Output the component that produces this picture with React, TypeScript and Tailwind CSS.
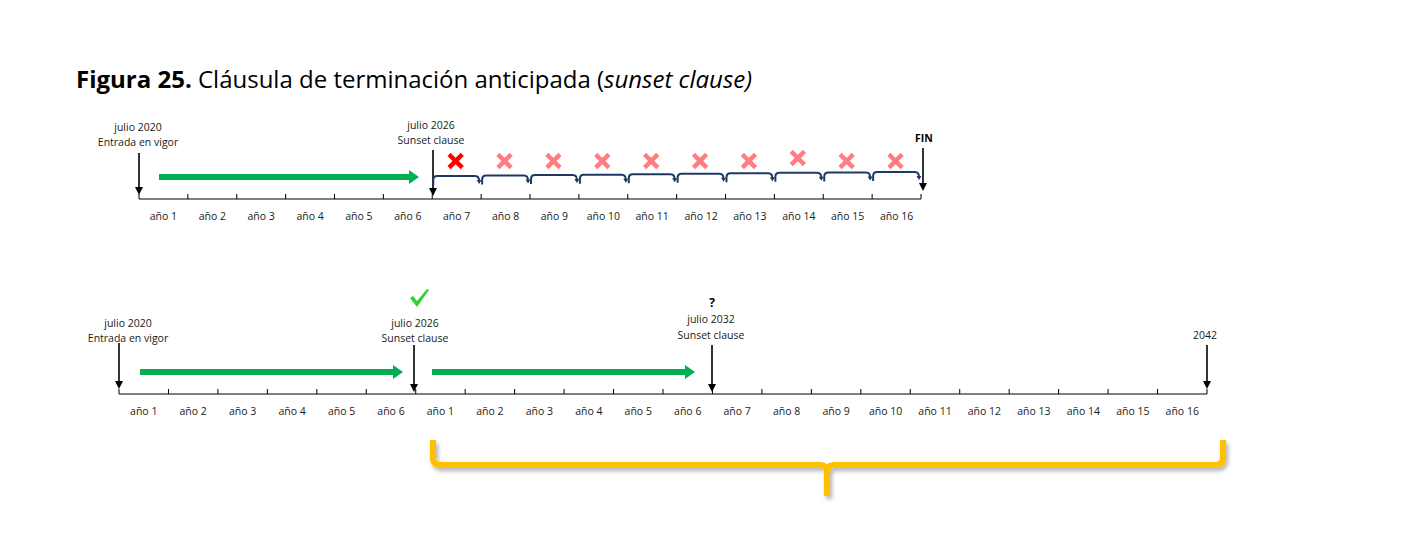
const FONT = "'Open Sans', 'Noto Sans', sans-serif";

function DownArrow({ x, y1, y2 }: { x: number; y1: number; y2: number }) {
  return (
    <g>
      <line x1={x} y1={y1} x2={x} y2={y2 - 7} stroke="#000" strokeWidth={1.6} />
      <polygon points={`${x - 4},${y2 - 8} ${x + 4},${y2 - 8} ${x},${y2}`} fill="#000" />
    </g>
  );
}

function GreenArrow({ x1, x2, y }: { x1: number; x2: number; y: number }) {
  return (
    <g fill="#00b050">
      <rect x={x1} y={y - 3} width={x2 - x1 - 9} height={6} />
      <polygon points={`${x2 - 10},${y - 7} ${x2},${y} ${x2 - 10},${y + 7}`} />
    </g>
  );
}

function Cross({ cx, cy, color }: { cx: number; cy: number; color: string }) {
  return (
    <g stroke={color} strokeWidth={4.5} strokeLinecap="square">
      <line x1={cx - 5} y1={cy - 5} x2={cx + 5} y2={cy + 5} />
      <line x1={cx + 5} y1={cy - 5} x2={cx - 5} y2={cy + 5} />
    </g>
  );
}

function Label({ x, y, children, bold }: { x: number; y: number; children: React.ReactNode; bold?: boolean }) {
  return (
    <text
      x={x}
      y={y}
      textAnchor="middle"
      fontSize={10.5}
      fontWeight={bold ? 700 : 400}
      fill={bold ? "#000" : "#1a1a1a"}
      style={{ fontFamily: FONT }}
    >
      {children}
    </text>
  );
}

function Axis({ x0, x1, y, labels }: { x0: number; x1: number; y: number; labels: string[] }) {
  const n = labels.length;
  const step = (x1 - x0) / n;
  const ticks = Array.from({ length: n + 1 }, (_, i) => x0 + i * step);
  return (
    <g>
      <line x1={x0} y1={y} x2={x1} y2={y} stroke="#000" strokeWidth={1.2} />
      {ticks.map((t, i) => (
        <line key={i} x1={t} y1={y - 5} x2={t} y2={y} stroke="#000" strokeWidth={1} />
      ))}
      {labels.map((l, i) => (
        <Label key={i} x={x0 + (i + 0.5) * step} y={y + 21}>
          {l}
        </Label>
      ))}
    </g>
  );
}

const years = (a: number, b: number) => Array.from({ length: b - a + 1 }, (_, i) => `año ${a + i}`);

function TopTimeline() {
  const x0 = 139;
  const step = (921 - 139) / 16;
  const brackets = Array.from({ length: 10 }, (_, k) => {
    const i = k + 6;
    const xl = x0 + i * step + 1;
    const xr = x0 + (i + 1) * step - 1;
    const y = 176 - k * 0.45;
    return { xl, xr, y, cx: (xl + xr) / 2 };
  });
  return (
    <svg width={1428} height={140} viewBox="0 92 1428 140" className="block">
      <Axis x0={x0} x1={921} y={199} labels={years(1, 16)} />
      <Label x={138} y={131}>julio 2020</Label>
      <Label x={138} y={146}>Entrada en vigor</Label>
      <DownArrow x={139} y1={153} y2={195} />
      <GreenArrow x1={159} x2={419} y={177} />
      <Label x={431} y={129}>julio 2026</Label>
      <Label x={431} y={144}>Sunset clause</Label>
      <DownArrow x={433} y1={150} y2={196} />
      {brackets.map((b, k) => (
        <g key={k}>
          <path
            d={`M ${b.xl} ${b.y + 9} L ${b.xl} ${b.y + 4} Q ${b.xl} ${b.y} ${b.xl + 4} ${b.y} L ${b.xr - 5} ${b.y} Q ${b.xr - 1} ${b.y} ${b.xr - 1} ${b.y + 5}`}
            fill="none"
            stroke="#1f3864"
            strokeWidth={2}
          />
          <polygon
            points={`${b.xr - 3.5},${b.y + 4} ${b.xr + 1.5},${b.y + 4} ${b.xr - 1},${b.y + 8}`}
            fill="#1f3864"
          />
          <Cross cx={b.cx - 1} cy={k === 7 ? 158 : 161} color={k === 0 ? "#ff0000" : "#ff7c80"} />
        </g>
      ))}
      <Label x={924} y={142} bold>
        FIN
      </Label>
      <DownArrow x={923} y1={148} y2={191} />
    </svg>
  );
}

function BottomTimeline() {
  return (
    <svg width={1428} height={306} viewBox="0 232 1428 306" className="block">
      <defs>
        <filter id="shadow" x="-5%" y="-50%" width="110%" height="200%">
          <feDropShadow dx={2} dy={3} stdDeviation={2} floodColor="#000" floodOpacity={0.3} />
        </filter>
      </defs>
      <Axis x0={119} x1={1207} y={394} labels={[...years(1, 6), ...years(1, 16)]} />
      <Label x={128} y={327}>julio 2020</Label>
      <Label x={128} y={342}>Entrada en vigor</Label>
      <DownArrow x={119} y1={343} y2={389} />
      <GreenArrow x1={140} x2={403} y={372} />

      <path d="M410 298 L413 296 L417 301 L427 289 L429 290 L417 307 Z" fill="#2fd02f" />
      <Label x={415} y={327}>julio 2026</Label>
      <Label x={415} y={342}>Sunset clause</Label>
      <DownArrow x={414} y1={345} y2={392} />
      <GreenArrow x1={432} x2={695} y={372} />

      <text x={712} y={307} textAnchor="middle" fontSize={12} fontWeight={700} style={{ fontFamily: FONT }}>
        ?
      </text>
      <Label x={711} y={323}>julio 2032</Label>
      <Label x={711} y={339}>Sunset clause</Label>
      <DownArrow x={712} y1={345} y2={392} />

      <Label x={1205} y={339}>2042</Label>
      <DownArrow x={1207} y1={345} y2={389} />

      <path
        d="M 433 440 L 433 458 Q 433 465 441 465 L 820 465 Q 827 465 827 472 L 827 496 M 827 472 Q 827 465 834 465 L 1215 465 Q 1223 465 1223 458 L 1223 440"
        fill="none"
        stroke="#ffc000"
        strokeWidth={6}
        strokeLinejoin="round"
        filter="url(#shadow)"
      />
    </svg>
  );
}

export default function App() {
  return (
    <div className="w-[1428px] h-[538px] bg-white overflow-hidden">
      <div className="pl-[76px] pt-[63px] h-[92px] text-[24px] leading-[32px] text-black whitespace-nowrap" style={{ fontFamily: FONT }}>
        <span className="font-bold">Figura 25.</span> Cláusula de terminación anticipada (<span className="italic">sunset clause)</span>
      </div>
      <TopTimeline />
      <BottomTimeline />
    </div>
  );
}
